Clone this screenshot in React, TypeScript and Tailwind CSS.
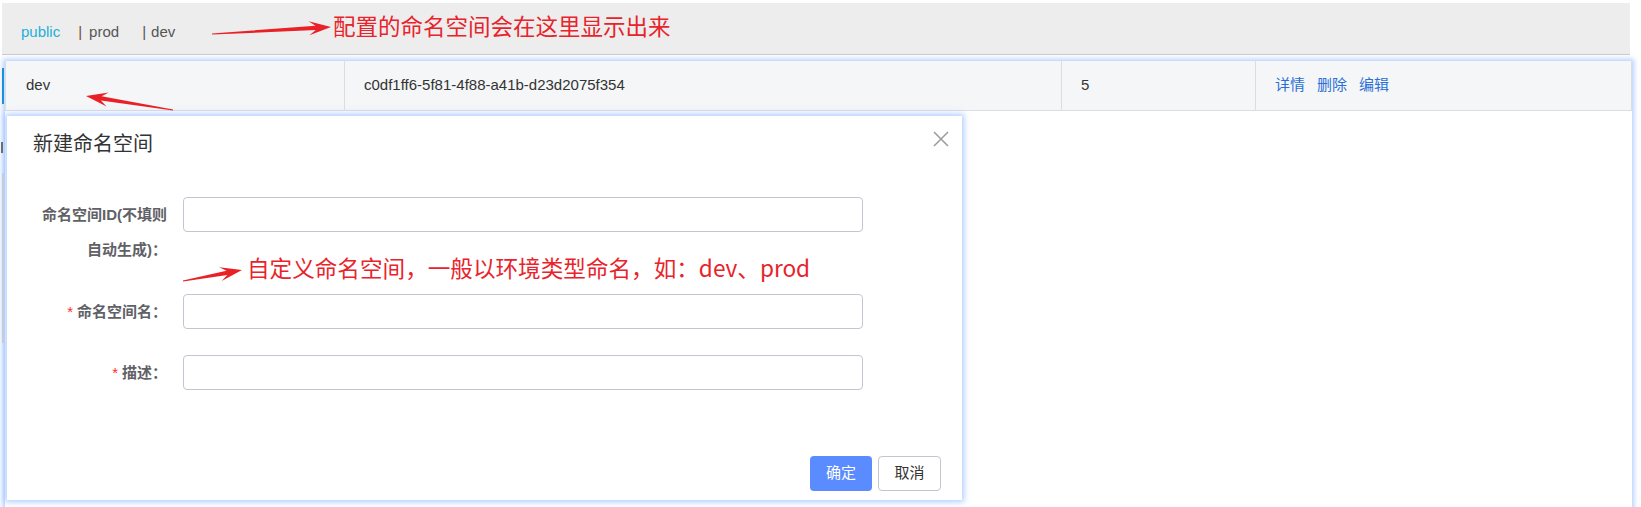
import React from "react";

type Pt = [number, number];

function arrowPoly(x1: number, y1: number, x2: number, y2: number, head = 22, hw = 7, sw = 2.2): string {
  const dx = x2 - x1;
  const dy = y2 - y1;
  const L = Math.hypot(dx, dy);
  const ux = dx / L;
  const uy = dy / L;
  const nx = -uy;
  const ny = ux;
  const bx = x2 - ux * head * 0.7;
  const by = y2 - uy * head * 0.7;
  const wx = x2 - ux * head;
  const wy = y2 - uy * head;
  const pts: Pt[] = [
    [x1 + nx * 0.6, y1 + ny * 0.6],
    [bx + nx * sw, by + ny * sw],
    [wx + nx * hw, wy + ny * hw],
    [x2, y2],
    [wx - nx * hw, wy - ny * hw],
    [bx - nx * sw, by - ny * sw],
    [x1 - nx * 0.6, y1 - ny * 0.6],
  ];
  return pts.map((p) => `${p[0].toFixed(1)},${p[1].toFixed(1)}`).join(" ");
}

function FormRow({
  label,
  required,
  twoLine,
  mb,
}: {
  label: React.ReactNode;
  required?: boolean;
  twoLine?: boolean;
  mb: string;
}) {
  return (
    <div className={`flex items-start pl-[30px] ${mb}`}>
      <div
        className={`w-[130px] text-right text-[15px] leading-[35px] font-bold text-[#5f6166] ${
          twoLine ? "" : "whitespace-nowrap"
        }`}
      >
        {required && <span className="text-[#ff2d1f] font-normal mr-[4px]">*</span>}
        {label}
      </div>
      <div className="ml-[16px] w-[680px] h-[35px] rounded-[4px] border border-[#c4c6cf] bg-white" />
    </div>
  );
}

export default function App() {
  return (
    <div className="relative w-[1641px] h-[507px] overflow-hidden bg-white font-['Liberation_Sans','Noto_Sans_CJK_SC',sans-serif]">
      {/* top namespace bar */}
      <div className="pt-[3px] pl-[2px]">
        <div className="w-[1628px] h-[52px] bg-[#ededed] border-b border-[#c9cbce] flex items-start pt-[18px] pl-[19px] text-[15px] leading-[22px]">
          <span className="text-[#1eb0d8]">public</span>
          <span className="ml-[18px] text-[#7a4a3c]">|</span>
          <span className="ml-[7px] text-[#555]">prod</span>
          <span className="ml-[23px] text-[#555]">|</span>
          <span className="ml-[5px] text-[#555]">dev</span>
        </div>
      </div>

      {/* table container */}
      <div className="relative ml-[5px] mt-[6px] w-[1627px] h-[460px] shadow-[0_0_5px_2px_rgba(130,175,255,0.6)]">
        <div className="absolute left-[-3px] top-[7px] w-[2px] h-[36px] bg-[#1b8fe0]" />
        <div className="grid grid-cols-[339px_717px_194px_1fr] h-[50px] bg-[#f5f6f8] border-x border-b border-[#dcdde0] text-[15px] text-[#333]">
          <div className="flex items-center pl-[20px] border-r border-[#dcdde0]">dev</div>
          <div className="flex items-center pl-[19px] border-r border-[#dcdde0]">c0df1ff6-5f81-4f88-a41b-d23d2075f354</div>
          <div className="flex items-center pl-[19px] border-r border-[#dcdde0]">5</div>
          <div className="flex items-center pl-[19px] gap-[12px] text-[#2a6fd6]">
            <span>详情</span>
            <span>删除</span>
            <span>编辑</span>
          </div>
        </div>
      </div>

      {/* things behind the modal on the left */}
      <div className="absolute left-[1px] top-[142px] w-[2px] h-[11px] bg-[#666]" />
      <div className="absolute left-[2px] top-[173px] w-[2px] h-[170px] bg-[#d4d4d4]" />

      {/* modal */}
      <div className="absolute left-[7px] top-[116px] w-[955px] h-[384px] bg-white shadow-[0_0_6px_2px_rgba(120,170,255,0.6)] flex flex-col">
        <div className="pt-[14px] pl-[26px] text-[20px] leading-[26px] text-[#333] font-['Noto_Sans_CJK_SC',sans-serif]">
          新建命名空间
        </div>
        <button className="absolute right-[13px] top-[15px] w-[16px] h-[16px]">
          <svg width="16" height="16" viewBox="0 0 16 16">
            <path d="M1 1 L15 15 M15 1 L1 15" stroke="#9a9a9a" strokeWidth="1.5" fill="none" />
          </svg>
        </button>
        <div className="mt-[41px]">
          <FormRow label="命名空间ID(不填则自动生成)：" twoLine mb="mb-[27px]" />
          <FormRow label="命名空间名：" required mb="mb-[26px]" />
          <FormRow label="描述：" required mb="mb-0" />
        </div>
        <div className="mt-auto flex justify-end gap-[6px] pr-[21px] pb-[9px]">
          <button className="w-[62px] h-[35px] rounded-[4px] bg-[#5a8bff] text-white text-[15px]">确定</button>
          <button className="w-[63px] h-[35px] rounded-[4px] border border-[#c4c6cf] bg-white text-[#333] text-[15px]">
            取消
          </button>
        </div>
      </div>

      {/* annotations */}
      <div className="absolute left-[333px] top-[10px] text-[22.5px] leading-[30px] text-[#e8232b] whitespace-nowrap font-['Noto_Sans_CJK_SC',sans-serif]">
        配置的命名空间会在这里显示出来
      </div>
      <div className="absolute left-[247px] top-[253px] text-[22.6px] leading-[30px] text-[#e8232b] whitespace-nowrap font-['Noto_Sans_CJK_SC',sans-serif]">
        自定义命名空间，一般以环境类型命名，如：dev、prod
      </div>
      <svg className="absolute left-0 top-0 pointer-events-none" width="1641" height="507">
        <polygon points={arrowPoly(212, 34, 331, 27)} fill="#ea2027" />
        <polygon points={arrowPoly(173, 110, 86, 96)} fill="#ea2027" />
        <polygon points={arrowPoly(183, 281, 242, 270)} fill="#ea2027" />
      </svg>
    </div>
  );
}
